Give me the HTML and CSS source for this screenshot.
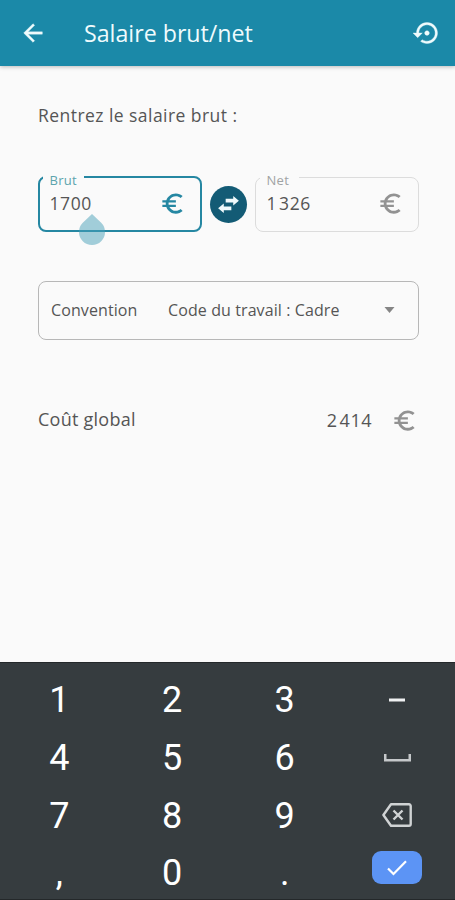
FILE: index.html
```html
<!DOCTYPE html>
<html lang="fr">
<head>
<meta charset="utf-8">
<title>Salaire brut/net</title>
<link rel="stylesheet" href="styles.css">
</head>
<body>
<svg class="defs" aria-hidden="true">
  <symbol id="euro" viewBox="0 0 24 24"><path fill="currentColor" d="M15 18.5c-2.51 0-4.68-1.42-5.76-3.5H15v-2H8.580c-.05-.33-.08-.66-.08-1s.03-.67.08-1H15V9H9.240C10.320 6.920 12.500 5.500 15 5.500c1.610 0 3.090.59 4.230 1.570L21 5.300C19.410 3.870 17.300 3 15 3c-3.920 0-7.240 2.510-8.480 6H3v2h3.060c-.04.33-.06.66-.06 1s.02.67.06 1H3v2h3.520c1.240 3.490 4.560 6 8.480 6 2.310 0 4.410-.87 6-2.300l-1.780-1.770c-1.130.98-2.600 1.570-4.220 1.570z"/></symbol>
</svg>
<header class="bar">
  <svg class="back" viewBox="0 0 24 24"><path fill="currentColor" stroke="currentColor" stroke-width=".3" d="M20 11H7.830l5.590-5.590L12 4l-8 8 8 8 1.410-1.410L7.830 13H20v-2z"/></svg>
  <h1 class="title">Salaire brut/net</h1>
  <svg class="restore" viewBox="0 0 24 24"><path fill="currentColor" stroke="currentColor" stroke-width=".3" d="M14 12c0-1.100-.9-2-2-2s-2 .9-2 2 .9 2 2 2 2-.9 2-2zm-2-9c-4.970 0-9 4.030-9 9H0l4 4 4-4H5c0-3.870 3.130-7 7-7s7 3.130 7 7-3.130 7-7 7c-1.510 0-2.910-.49-4.060-1.300l-1.420 1.440C8.040 20.300 9.940 21 12 21c4.970 0 9-4.030 9-9s-4.030-9-9-9z"/></svg>
</header>
<main class="content">
  <p class="prompt">Rentrez le salaire brut :</p>
  <div class="fields">
    <fieldset class="field active">
      <legend>Brut</legend>
      <div class="entry"><span>1700</span><svg class="euro"><use href="#euro"/></svg></div>
      <svg class="handle" viewBox="0 0 26 31"><path fill="currentColor" d="M13 0L22.200 8.800A13 13 0 1 1 3.800 8.800Z"/></svg>
    </fieldset>
    <div class="swap"><svg viewBox="0 0 22 18"><path fill="currentColor" d="M16 0l6 5-6 5V7H8V3h8zM6 8v3h8v4H6v3l-6-5z"/></svg></div>
    <fieldset class="field">
      <legend>Net</legend>
      <div class="entry"><span>1<i></i>326</span><svg class="euro"><use href="#euro"/></svg></div>
    </fieldset>
  </div>
  <div class="select">
    <span class="select-label">Convention</span>
    <span class="select-value">Code du travail : Cadre</span>
    <svg class="caret" viewBox="0 0 10 6"><path fill="currentColor" d="M0 0h10L5 6z"/></svg>
  </div>
  <div class="total">
    <span class="total-label">Coût global</span>
    <span class="total-value">2<i></i>414</span>
    <svg class="euro"><use href="#euro"/></svg>
  </div>
</main>
<section class="keyboard">
  <span>1</span><span>2</span><span>3</span>
  <span><svg width="16" height="4" viewBox="0 0 16 4"><path fill="#f0f1f2" d="M0 .5h16v3H0z"/></svg></span>
  <span>4</span><span>5</span><span>6</span>
  <span><svg width="27" height="8" viewBox="0 0 27 8"><path fill="none" stroke="#c5c8ca" stroke-width="2.500" d="M1.250 0v6.250h24.500V0"/></svg></span>
  <span>7</span><span>8</span><span>9</span>
  <span><svg width="30" height="24" viewBox="0 0 30 24"><path fill="none" stroke="#d0d3d4" stroke-width="2.400" stroke-linejoin="round" d="M9 1.300h18a1.700 1.700 0 0 1 1.700 1.700v18a1.700 1.700 0 0 1-1.700 1.700H9L1.400 12zM11.500 7.500l9 9m0-9l-9 9"/></svg></span>
  <span>,</span><span>0</span><span>.</span>
  <span><b class="enter"><svg width="20" height="16" viewBox="0 0 20 16"><path fill="none" stroke="#fff" stroke-width="2.200" d="M1 8.500l5.500 5.500L19 1.200"/></svg></b></span>
</section>
</body>
</html>
```
FILE: styles.css
```css
* { box-sizing: border-box; }
body {
  margin: 0;
  width: 455px;
  height: 900px;
  display: flex;
  flex-direction: column;
  overflow: hidden;
  background: #fafafa;
  color: #555;
  font-family: "Open Sans", "Noto Sans", sans-serif;
}
svg { display: block; flex: none; }
.defs { position: absolute; width: 0; height: 0; }
.bar {
  height: 66px;
  flex: none;
  display: flex;
  align-items: center;
  padding: 0 14px 1px 19px;
  background: #1b89a8;
  color: #effbfd;
  box-shadow: 0 1px 4px rgba(0, 0, 0, .25);
}
.back { width: 28px; height: 28px; }
.title { margin: 0 auto 0 37px; font-size: 23.200px; font-weight: 400; line-height: 32px; white-space: nowrap; }
.restore { width: 28px; height: 28px; }
.content { flex: 1; padding: 37px 36px 0 38px; }
.prompt { margin: 0; font-size: 17.500px; line-height: 24px; letter-spacing: .45px; }
.fields { display: flex; align-items: flex-end; margin: 39px 0 0 -.5px; height: 66px; }
.field {
  position: relative;
  width: 164px;
  height: 63px;
  margin: 0;
  padding: 0 14px 0 4px;
  border: 1px solid #dcdcdc;
  border-radius: 8px;
  min-width: 0;
}
.field.active { border: 2px solid #2587a2; padding-left: 3px; }
.field legend { height: 16px; padding: 3px 10px 0 7px; font-size: 13px; line-height: 16px; letter-spacing: .3px; color: #a0a3a4; }
.active legend { padding-right: 7px; color: #5da4ad; }
.entry { display: flex; align-items: center; justify-content: space-between; height: 36px; padding-left: 7px; font-size: 17.500px; letter-spacing: .6px; }
.euro { width: 27px; height: 27px; color: #929292; }
.active .euro { color: #2587a2; }
i { display: inline-block; width: 2px; }
.handle { position: absolute; left: 39px; top: 29px; width: 26px; height: 31px; color: rgba(72, 159, 184, .5); }
.swap { width: 37px; height: 37px; margin: 0 8px 9px; border-radius: 50%; display: grid; place-items: center; background: #135b75; color: #f0fafc; }
.swap svg { width: 21px; height: 17px; }
.select { display: flex; align-items: center; width: 381px; height: 59px; margin-top: 49px; padding: 0 23px 1px 12px; border: 1.500px solid #b7b7b7; border-radius: 8px; font-size: 16px; letter-spacing: .1px; }
.select-label { width: 117px; }
.select-value { flex: 1; }
.caret { width: 11px; height: 6px; color: #858585; }
.total { display: flex; align-items: center; height: 30px; margin-top: 65px; padding-right: 1px; font-size: 18px; letter-spacing: .25px; }
.total-label { flex: 1; margin-top: -2px; }
.total-value { margin-right: 19px; letter-spacing: .5px; }
.keyboard {
  flex: none;
  height: 238px;
  display: grid;
  grid-template-columns: repeat(4, 112.700px);
  grid-template-rows: repeat(4, 57.800px);
  padding: 8px 0 0 3px;
  border-top: 1px solid #24282a;
  border-bottom: 1px solid #24282a;
  background: #363c3f;
  color: #fff;
  font: 36px/58px Roboto, sans-serif;
}
.keyboard span { display: grid; place-items: center; }
.enter { width: 50px; height: 33px; margin-top: -11px; border-radius: 9px; display: grid; place-items: center; background: #5c94f5; }
```
